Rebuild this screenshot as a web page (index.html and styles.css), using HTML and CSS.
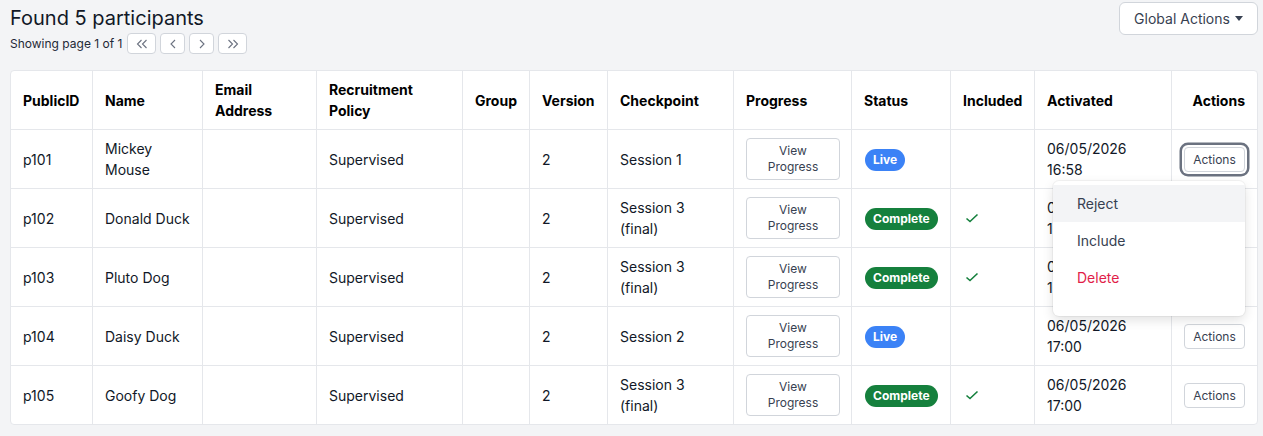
FILE: index.html
```html
<!DOCTYPE html>
<html lang="en">
<head>
<meta charset="utf-8">
<title>Participants</title>
<link rel="stylesheet" href="styles.css">
</head>
<body>
<div class="page">
  <header class="top">
    <div class="heading">
      <h1 class="title">Found 5 participants</h1>
      <div class="pager">
        <span class="pager-text">Showing page 1 of 1</span>
        <button class="pg pg-first" aria-label="First page">
          <svg width="12" height="10" viewBox="0 0 12 10"><path d="M5.5 1 L1.5 5 L5.5 9 M10.5 1 L6.5 5 L10.5 9" fill="none" stroke="#6b7280" stroke-width="1.1"/></svg>
        </button>
        <button class="pg pg-prev" aria-label="Previous page">
          <svg width="8" height="10" viewBox="0 0 8 10"><path d="M6 1 L2 5 L6 9" fill="none" stroke="#6b7280" stroke-width="1.1"/></svg>
        </button>
        <button class="pg pg-next" aria-label="Next page">
          <svg width="8" height="10" viewBox="0 0 8 10"><path d="M2 1 L6 5 L2 9" fill="none" stroke="#6b7280" stroke-width="1.1"/></svg>
        </button>
        <button class="pg pg-last" aria-label="Last page">
          <svg width="12" height="10" viewBox="0 0 12 10"><path d="M1.5 1 L5.5 5 L1.5 9 M6.5 1 L10.5 5 L6.5 9" fill="none" stroke="#6b7280" stroke-width="1.1"/></svg>
        </button>
      </div>
    </div>
    <button class="global-btn">Global Actions <span class="caret"></span></button>
  </header>

  <div class="table-wrap">
    <table class="grid">
      <colgroup>
        <col class="c1"><col class="c2"><col class="c3"><col class="c4"><col class="c5"><col class="c6">
        <col class="c7"><col class="c8"><col class="c9"><col class="c10"><col class="c11"><col class="c12">
      </colgroup>
      <thead>
        <tr>
          <th>PublicID</th>
          <th>Name</th>
          <th>Email Address</th>
          <th>Recruitment Policy</th>
          <th class="center">Group</th>
          <th>Version</th>
          <th>Checkpoint</th>
          <th>Progress</th>
          <th>Status</th>
          <th>Included</th>
          <th>Activated</th>
          <th class="right">Actions</th>
        </tr>
      </thead>
      <tbody>
        <tr>
          <td>p101</td>
          <td>Mickey Mouse</td>
          <td></td>
          <td>Supervised</td>
          <td></td>
          <td>2</td>
          <td>Session 1</td>
          <td><button class="progress-btn">View Progress</button></td>
          <td><span class="badge live">Live</span></td>
          <td></td>
          <td>06/05/2026 16:58</td>
          <td>
            <div class="menu-anchor">
              <button class="act-btn focused">Actions</button>
              <div class="menu">
                <div class="menu-item active">Reject</div>
                <div class="menu-item">Include</div>
                <div class="menu-item danger">Delete</div>
              </div>
            </div>
          </td>
        </tr>
        <tr>
          <td>p102</td>
          <td>Donald Duck</td>
          <td></td>
          <td>Supervised</td>
          <td></td>
          <td>2</td>
          <td>Session 3 (final)</td>
          <td><button class="progress-btn">View Progress</button></td>
          <td><span class="badge complete">Complete</span></td>
          <td><svg class="check" width="16" height="16" viewBox="0 0 16 16"><path d="M2.5 8.5 L6 11.5 L13.5 4.5" fill="none" stroke="#15803d" stroke-width="1.6"/></svg></td>
          <td>06/05/2026 16:59</td>
          <td><button class="act-btn">Actions</button></td>
        </tr>
        <tr>
          <td>p103</td>
          <td>Pluto Dog</td>
          <td></td>
          <td>Supervised</td>
          <td></td>
          <td>2</td>
          <td>Session 3 (final)</td>
          <td><button class="progress-btn">View Progress</button></td>
          <td><span class="badge complete">Complete</span></td>
          <td><svg class="check" width="16" height="16" viewBox="0 0 16 16"><path d="M2.5 8.5 L6 11.5 L13.5 4.5" fill="none" stroke="#15803d" stroke-width="1.6"/></svg></td>
          <td>06/05/2026 16:59</td>
          <td><button class="act-btn">Actions</button></td>
        </tr>
        <tr>
          <td>p104</td>
          <td>Daisy Duck</td>
          <td></td>
          <td>Supervised</td>
          <td></td>
          <td>2</td>
          <td>Session 2</td>
          <td><button class="progress-btn">View Progress</button></td>
          <td><span class="badge live">Live</span></td>
          <td></td>
          <td>06/05/2026 17:00</td>
          <td><button class="act-btn">Actions</button></td>
        </tr>
        <tr>
          <td>p105</td>
          <td>Goofy Dog</td>
          <td></td>
          <td>Supervised</td>
          <td></td>
          <td>2</td>
          <td>Session 3 (final)</td>
          <td><button class="progress-btn">View Progress</button></td>
          <td><span class="badge complete">Complete</span></td>
          <td><svg class="check" width="16" height="16" viewBox="0 0 16 16"><path d="M2.5 8.5 L6 11.5 L13.5 4.5" fill="none" stroke="#15803d" stroke-width="1.6"/></svg></td>
          <td>06/05/2026 17:00</td>
          <td><button class="act-btn">Actions</button></td>
        </tr>
      </tbody>
    </table>
  </div>
</div>
</body>
</html>
```

FILE: styles.css
```css
* { box-sizing: border-box; }

html, body {
  margin: 0;
  padding: 0;
  background: #f3f4f6;
  font-family: Inter, "Noto Sans", "Liberation Sans", sans-serif;
  color: #111827;
}

button {
  font-family: inherit;
  cursor: pointer;
}

.page {
  padding: 2px 5px 0 10px;
}

.top {
  display: flex;
  justify-content: space-between;
  align-items: flex-start;
}

.heading {
  padding-top: 4px;
}

.title {
  margin: 0;
  font-size: 20px;
  line-height: 24px;
  font-weight: 400;
  color: #111827;
}

.pager {
  display: flex;
  align-items: center;
  gap: 4px;
  margin-top: 3px;
}

.pager-text {
  font-size: 12px;
  line-height: 21px;
  color: #1f2937;
  margin-right: 1px;
}

.pg {
  height: 21px;
  padding: 0;
  background: #fff;
  border: 1px solid #d1d5db;
  border-radius: 4px;
  display: inline-flex;
  align-items: center;
  justify-content: center;
}

.pg-first { width: 29px; }
.pg-prev { width: 25px; }
.pg-next { width: 25px; }
.pg-last { width: 29px; }

.global-btn {
  height: 33px;
  width: 139px;
  display: inline-flex;
  align-items: center;
  justify-content: center;
  gap: 5px;
  padding: 0 12px;
  background: #fff;
  border: 1px solid #d1d5db;
  border-radius: 6px;
  font-size: 14px;
  color: #374151;
}

.caret {
  width: 0;
  height: 0;
  border-left: 4.5px solid transparent;
  border-right: 4.5px solid transparent;
  border-top: 5px solid #374151;
}

.table-wrap {
  margin-top: 16px;
  background: #fff;
  border: 1px solid #e5e7eb;
  border-radius: 4px;
}

.grid {
  width: 1246px;
  table-layout: fixed;
  border-collapse: separate;
  border-spacing: 0;
  font-size: 14px;
  line-height: 21px;
}

.c1 { width: 82px; }
.c2 { width: 110px; }
.c3 { width: 114px; }
.c4 { width: 146px; }
.c5 { width: 67px; }
.c6 { width: 78px; }
.c7 { width: 126px; }
.c8 { width: 118px; }
.c9 { width: 99px; }
.c10 { width: 84px; }
.c11 { width: 137px; }
.c12 { width: 85px; }

.grid th,
.grid td {
  padding: 8px 12px;
  text-align: left;
  vertical-align: middle;
  border-right: 1px solid #e5e7eb;
  border-bottom: 1px solid #e5e7eb;
  color: #111827;
}

.grid th {
  font-weight: 700;
  color: #000;
}

.grid tr > :last-child { border-right: none; }
.grid tbody tr:last-child td { border-bottom: none; }

.grid th.center { text-align: center; }
.grid th.right { text-align: right; }

.progress-btn {
  display: block;
  width: 94px;
  padding: 4px 12px;
  background: #fff;
  border: 1px solid #d1d5db;
  border-radius: 4px;
  font-size: 12px;
  line-height: 16px;
  color: #374151;
  text-align: center;
}

.badge {
  display: inline-block;
  padding: 0 8px;
  height: 22px;
  line-height: 22px;
  border-radius: 11px;
  font-size: 12px;
  font-weight: 700;
  color: #fff;
  margin-left: 1px;
}

.badge.live { background: #3b82f6; }
.badge.complete { background: #15803d; }

.check {
  display: block;
  margin-left: 1px;
}

.act-btn {
  display: block;
  width: 61px;
  height: 25px;
  padding: 0;
  background: #fff;
  border: 1px solid #d1d5db;
  border-radius: 4px;
  font-size: 12px;
  color: #374151;
}

.act-btn.focused {
  box-shadow: 0 0 0 2px #fff, 0 0 0 4.5px #6b7280;
}

.menu-anchor {
  position: relative;
}

.menu {
  position: absolute;
  right: 0;
  top: calc(100% + 9px);
  width: 192px;
  padding: 4px 0 20px;
  background: #fff;
  border-radius: 6px;
  box-shadow: 0 0 0 1px rgba(0, 0, 0, 0.04), 0 4px 12px rgba(0, 0, 0, 0.12);
  z-index: 10;
}

.menu-item {
  padding: 8px 24px;
  font-size: 14px;
  line-height: 21px;
  color: #374151;
}

.menu-item.active { background: #f3f4f6; }
.menu-item.danger { color: #e11d48; }
```
